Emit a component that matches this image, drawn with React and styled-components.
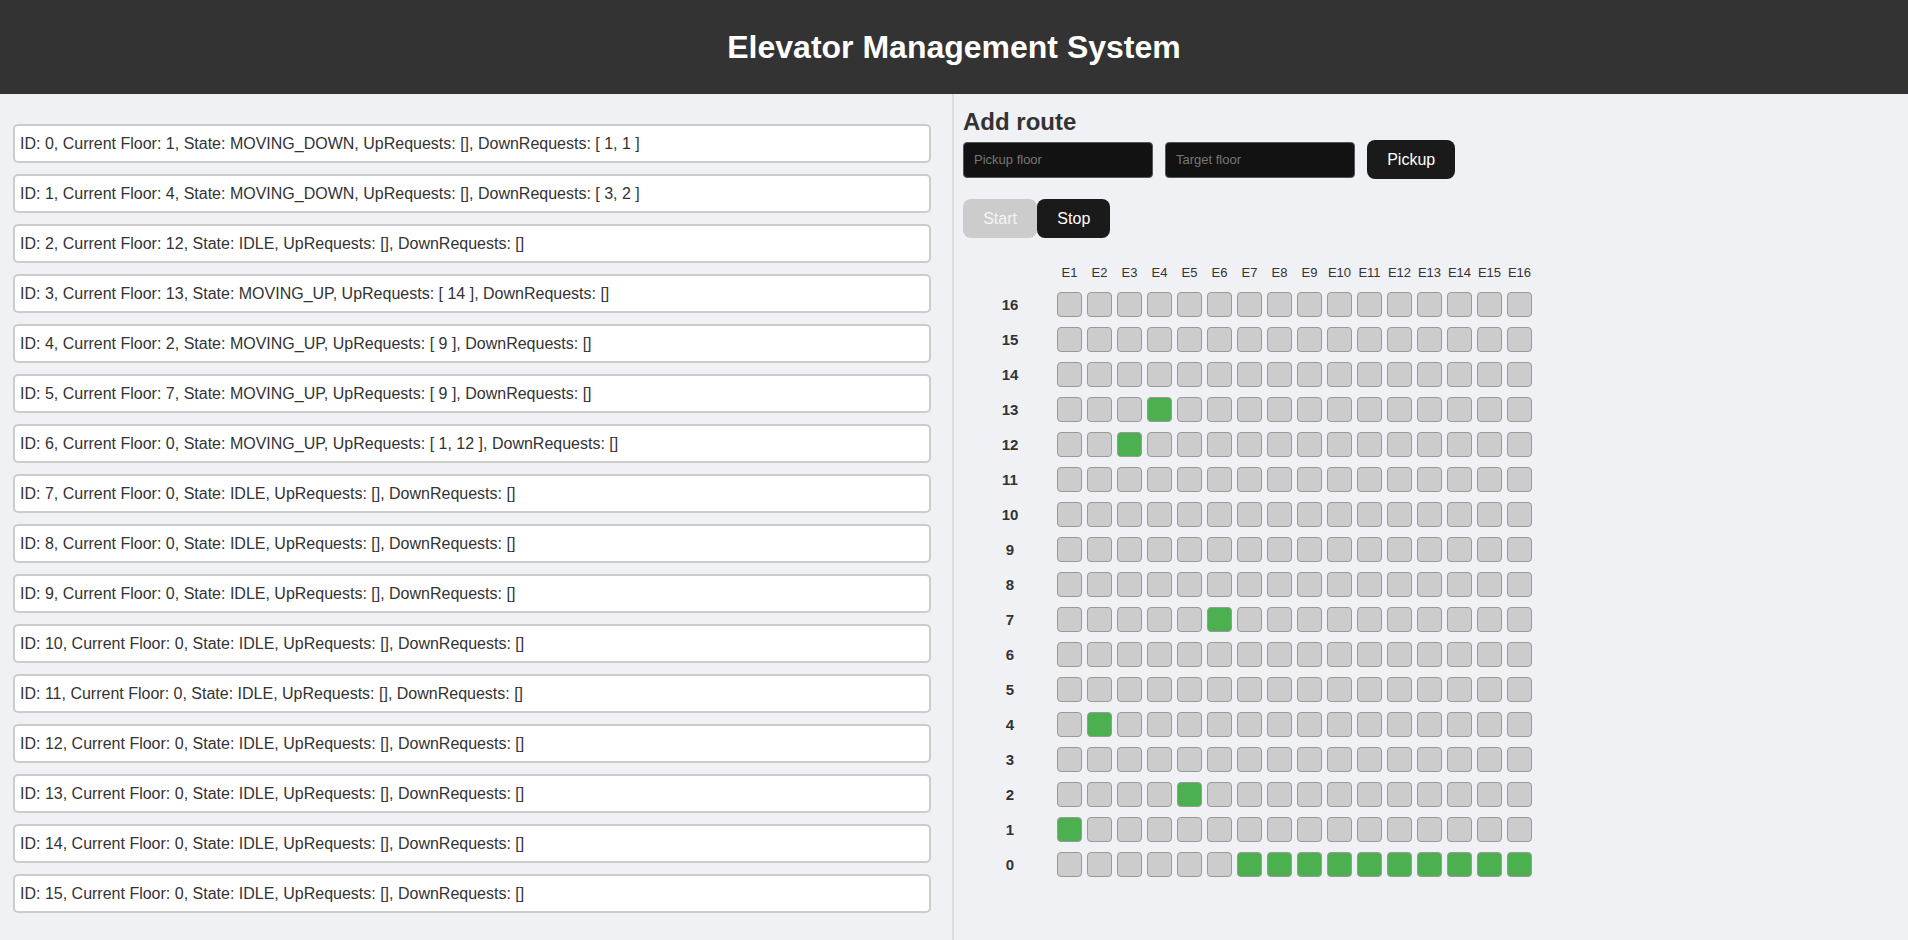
import styled, { createGlobalStyle } from "styled-components";

const GlobalStyle = createGlobalStyle`
  * {
    box-sizing: border-box;
  }
  body {
    margin: 0;
    background-color: #f0f1f5;
    font-family: "Liberation Sans", Arial, sans-serif;
    color: #333;
  }
`;

const Page = styled.div`
  min-height: 100vh;
  display: flex;
  flex-direction: column;
`;

const Header = styled.header`
  height: 94px;
  background-color: #333;
  display: flex;
  align-items: center;
  justify-content: center;
`;

const Title = styled.h1`
  margin: 0;
  font-size: 32px;
  font-weight: bold;
  color: #fff;
`;

const Main = styled.main`
  flex: 1;
  display: flex;
`;

const LeftPanel = styled.section`
  width: 50%;
  border-right: 2px solid #ddd;
  padding: 30px 21px 20px 13px;
  display: flex;
  flex-direction: column;
  gap: 11px;
`;

const ElevatorCard = styled.div`
  background-color: #fff;
  border: 2px solid #ccc;
  border-radius: 5px;
  padding: 8px 5px;
  font-size: 16px;
  line-height: 19px;
  color: #333;
  white-space: nowrap;
`;

const RightPanel = styled.section`
  width: 50%;
  padding: 14px 9px;
`;

const Heading = styled.h2`
  margin: 0 0 4px;
  font-size: 24px;
  line-height: 28px;
  font-weight: bold;
  color: #333;
`;

const FormRow = styled.div`
  display: flex;
  align-items: center;
  gap: 12px;
`;

const FloorInput = styled.input`
  width: 190px;
  height: 36px;
  background-color: #121212;
  border: 1px solid #555;
  border-radius: 4px;
  padding: 0 10px;
  font-family: inherit;
  font-size: 13px;
  color: #fff;
  &::placeholder {
    color: #777;
  }
`;

const Button = styled.button`
  border: 1px solid transparent;
  border-radius: 8px;
  padding: 0.6em 1.2em;
  font-family: inherit;
  font-size: 16px;
  line-height: normal;
  background-color: ${(props) => (props.disabled ? "#ccc" : "#1a1a1a")};
  color: ${(props) => (props.disabled ? "#f4f4f4" : "#fff")};
  cursor: ${(props) => (props.disabled ? "default" : "pointer")};
`;

const ControlRow = styled.div`
  display: flex;
  margin-top: 20px;
`;

const Grid = styled.div`
  margin-top: 24px;
  display: grid;
  grid-template-columns: 89px repeat(16, 25px);
  grid-template-rows: 20px;
  grid-auto-rows: 25px;
  column-gap: 5px;
  row-gap: 10px;
  align-items: center;
`;

const ColLabel = styled.div`
  font-size: 13px;
  white-space: nowrap;
  display: flex;
  justify-content: center;
  color: #333;
`;

const RowLabel = styled.div`
  font-size: 15px;
  font-weight: bold;
  text-align: center;
  padding-left: 5px;
  line-height: 25px;
  color: #333;
`;

const Cell = styled.div`
  width: 25px;
  height: 25px;
  border: 1px solid #999;
  border-radius: 4px;
  background-color: ${(props) => (props.$active ? "#4caf50" : "#ccc")};
`;

const elevators = [
  { floor: 1, state: "MOVING_DOWN", up: [], down: [1, 1] },
  { floor: 4, state: "MOVING_DOWN", up: [], down: [3, 2] },
  { floor: 12, state: "IDLE", up: [], down: [] },
  { floor: 13, state: "MOVING_UP", up: [14], down: [] },
  { floor: 2, state: "MOVING_UP", up: [9], down: [] },
  { floor: 7, state: "MOVING_UP", up: [9], down: [] },
  { floor: 0, state: "MOVING_UP", up: [1, 12], down: [] },
  ...Array.from({ length: 9 }, () => ({ floor: 0, state: "IDLE", up: [], down: [] })),
];

const fmt = (list) => (list.length ? `[ ${list.join(", ")} ]` : "[]");

const floors = Array.from({ length: 17 }, (_, i) => 16 - i);

export default function App() {
  return (
    <Page>
      <GlobalStyle />
      <Header>
        <Title>Elevator Management System</Title>
      </Header>
      <Main>
        <LeftPanel>
          {elevators.map((e, id) => (
            <ElevatorCard key={id}>
              ID: {id}, Current Floor: {e.floor}, State: {e.state}, UpRequests: {fmt(e.up)}, DownRequests: {fmt(e.down)}
            </ElevatorCard>
          ))}
        </LeftPanel>
        <RightPanel>
          <Heading>Add route</Heading>
          <FormRow>
            <FloorInput placeholder="Pickup floor" />
            <FloorInput placeholder="Target floor" />
            <Button>Pickup</Button>
          </FormRow>
          <ControlRow>
            <Button disabled>Start</Button>
            <Button>Stop</Button>
          </ControlRow>
          <Grid>
            <div />
            {elevators.map((_, id) => (
              <ColLabel key={id}>E{id + 1}</ColLabel>
            ))}
            {floors.map((f) => [
              <RowLabel key={`l${f}`}>{f}</RowLabel>,
              ...elevators.map((e, id) => <Cell key={`${f}-${id}`} $active={e.floor === f} />),
            ])}
          </Grid>
        </RightPanel>
      </Main>
    </Page>
  );
}
